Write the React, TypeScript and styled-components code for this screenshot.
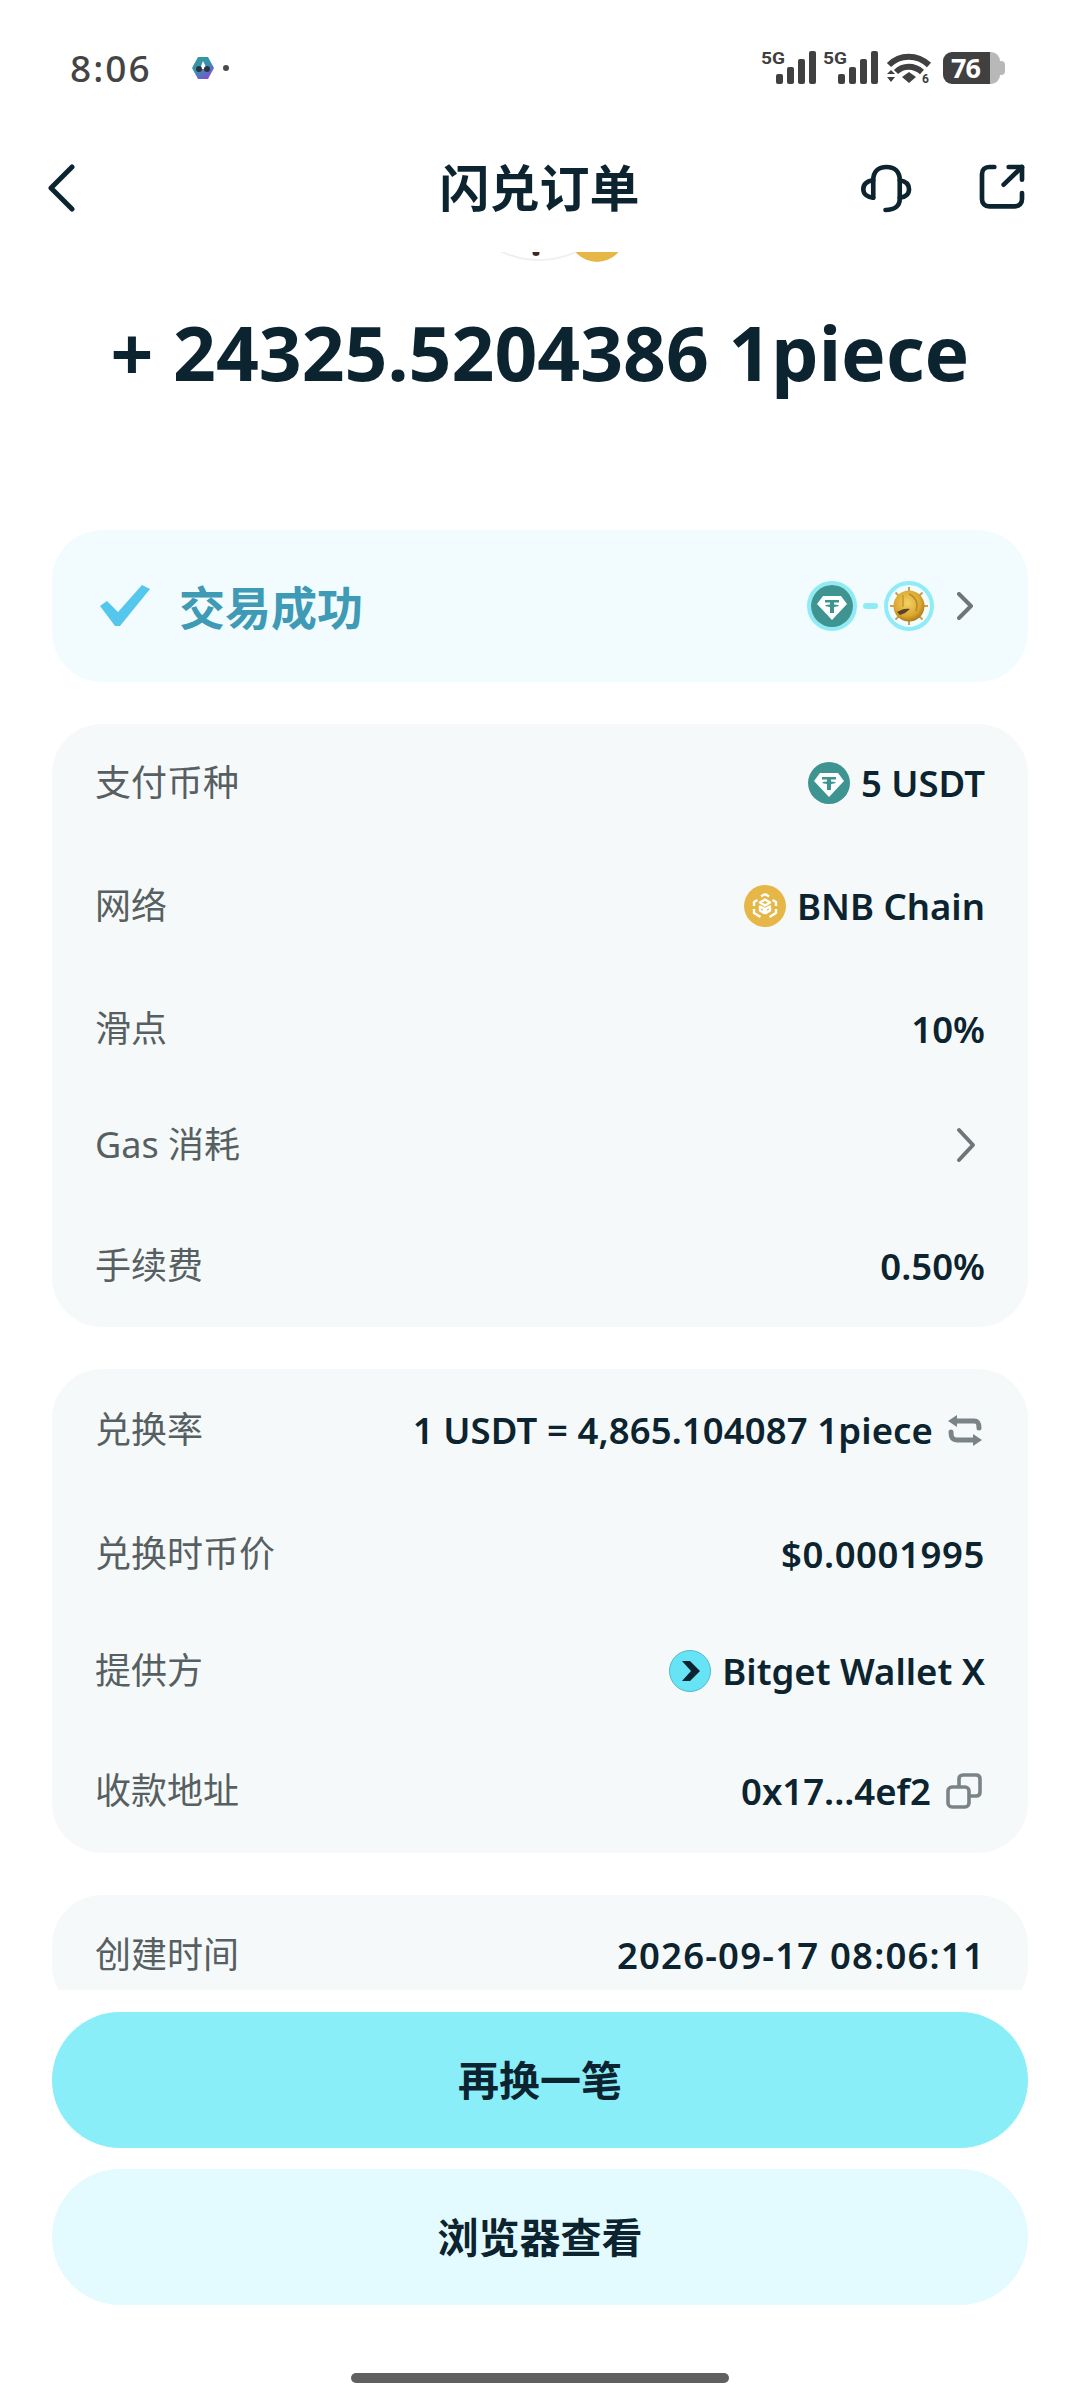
import React from "react";
import styled, { createGlobalStyle } from "styled-components";

const GlobalStyle = createGlobalStyle`
    html, body {
        margin: 0;
        padding: 0;
        background: #fff;
    }
    * {
        box-sizing: border-box;
    }
`;

const Page = styled.div`
    width: 1080px;
    height: 2400px;
    display: flex;
    flex-direction: column;
    overflow: hidden;
    background: #fff;
    color: #0c2330;
    font-family: "Noto Sans", "Noto Sans CJK SC", sans-serif;
`;

const StatusBar = styled.div`
    height: 130px;
    flex: none;
    display: flex;
    align-items: center;
    justify-content: space-between;
    padding: 6px 75px 0 70px;
`;

const StatusLeft = styled.div`
    display: flex;
    align-items: center;
    gap: 8px;
`;

const Time = styled.span`
    font-size: 37px;
    font-weight: 500;
    letter-spacing: 2px;
    color: #444;
    width: 113px;
    line-height: 40px;
`;

const Dot = styled.span`
    width: 6px;
    height: 6px;
    border-radius: 50%;
    background: #4a4a4a;
`;

const StatusRight = styled.div`
    display: flex;
    align-items: center;
    gap: 8px;
`;

const StatusIcon = styled.svg`
    display: block;
    overflow: visible;
`;

const Battery = styled.div`
    position: relative;
    width: 57px;
    height: 32px;
    margin-left: 3px;
    margin-right: 5px;
    border-radius: 9px;
    background: linear-gradient(90deg, #404040 0 47px, #b8b8b8 47px);
    color: #fff;
    font-size: 27px;
    font-weight: 700;
    line-height: 32px;
    padding-left: 8px;
    letter-spacing: -1px;

    &::after {
        content: "";
        position: absolute;
        right: -5px;
        top: 9px;
        width: 5px;
        height: 14px;
        border-radius: 0 4px 4px 0;
        background: #b8b8b8;
    }
`;

const NavBar = styled.div`
    height: 122px;
    flex: none;
    padding: 0 53px 6px 46px;
    display: grid;
    grid-template-columns: 1fr auto 1fr;
    align-items: center;
`;

const NavTitle = styled.h1`
    margin: 0;
    font-size: 50px;
    font-weight: 600;
    line-height: 60px;
    color: #0c2330;
    position: relative;
    left: 3px;
`;

const NavActions = styled.div`
    justify-self: end;
    display: flex;
    align-items: center;
    gap: 64px;
`;

const Scroller = styled.div`
    flex: 1;
    min-height: 0;
    overflow: hidden;
    padding: 0 52px;
    display: flex;
    flex-direction: column;
    align-items: stretch;
`;

const HeroCoins = styled.svg`
    display: block;
    flex: none;
    align-self: center;
    margin-left: 43px;
`;

const Amount = styled.div`
    margin-top: 40px;
    margin-bottom: 128px;
    flex: none;
    text-align: center;
    font-size: 75px;
    font-weight: 700;
    line-height: 100px;
    white-space: nowrap;
`;

const SuccessCard = styled.div`
    flex: none;
    height: 152px;
    border-radius: 50px;
    background: #f2fcfe;
    padding: 0 55px 0 48px;
    display: flex;
    align-items: center;
    justify-content: space-between;
`;

const SuccessLeft = styled.div`
    display: flex;
    align-items: center;
    gap: 29px;
`;

const SuccessText = styled.span`
    font-size: 46px;
    font-weight: 600;
    line-height: 60px;
    color: #3f9ab5;
    padding-top: 2px;
`;

const SuccessRight = styled.div`
    display: flex;
    align-items: center;
`;

const CoinRing = styled.div`
    width: 50px;
    height: 50px;
    border-radius: 50%;
    border: 4px solid #8fecf7;
    display: flex;
    align-items: center;
    justify-content: center;
`;

const RouteDash = styled.div`
    width: 15px;
    height: 6px;
    margin: 0 6px;
    border-radius: 3px;
    background: #8fecf7;
`;

const RouteChevron = styled.svg`
    margin-left: 23px;
`;

const Card = styled.div<{ $bottom: number; $top?: number }>`
    flex: none;
    margin-top: 42px;
    padding: ${(p) => p.$top ?? 29}px 43px ${(p) => p.$bottom}px;
    border-radius: 50px;
    background: #f6f9f9;
`;

const Row = styled.div<{ $gap?: number }>`
    height: 60px;
    margin-top: ${(p) => p.$gap ?? 0}px;
    display: flex;
    align-items: center;
    justify-content: space-between;
`;

const Label = styled.span`
    font-size: 36px;
    line-height: 60px;
    color: #565f62;
`;

const Value = styled.div<{ $spacing?: number }>`
    display: flex;
    align-items: center;
    font-size: 36.5px;
    font-weight: 600;
    line-height: 60px;
    letter-spacing: ${(p) => p.$spacing ?? 0}px;
    color: #0c2330;
    white-space: nowrap;
`;

const ValueIcon = styled.svg`
    margin-right: 11px;
    flex: none;
`;

const TrailingIcon = styled.svg`
    margin-left: 15px;
    margin-right: 3px;
    flex: none;
`;

const RowChevronIcon = styled.svg`
    margin-right: 7px;
`;

const Footer = styled.div`
    flex: none;
    padding: 22px 52px 0;
    display: flex;
    flex-direction: column;
    gap: 21px;
`;

const ActionButton = styled.div<{ $primary?: boolean }>`
    height: 136px;
    padding-bottom: 4px;
    border-radius: 68px;
    background: ${(p) => (p.$primary ? "#8aeef8" : "#e3fbfe")};
    display: flex;
    align-items: center;
    justify-content: center;
    font-size: 41px;
    font-weight: 700;
    color: #0c2330;
`;

const HomeBar = styled.div`
    flex: none;
    width: 378px;
    height: 10px;
    margin: 68px auto 17px;
    border-radius: 5px;
    background: #606060;
`;

const Signal = () => (
    <StatusIcon width="54" height="34" viewBox="0 0 54 34">
        <text x="-1" y="13" fontSize="17" fontWeight="700" fill="#404040" fontFamily="Roboto, sans-serif" textLength="24" lengthAdjust="spacingAndGlyphs">5G</text>
        <rect x="14" y="23" width="7" height="10" rx="2" fill="#404040" />
        <rect x="25" y="16" width="7" height="17" rx="2" fill="#404040" />
        <rect x="36" y="8" width="7" height="25" rx="2" fill="#404040" />
        <rect x="47" y="0" width="7" height="33" rx="2" fill="#404040" />
    </StatusIcon>
);

const Wifi = () => (
    <StatusIcon width="46" height="32" viewBox="0 0 46 32" fill="none">
        <path d="M3 13 C14 2 31 2 43 13" stroke="#404040" strokeWidth="6" />
        <path d="M10 20 C17 13 28 13 36 20" stroke="#404040" strokeWidth="6" />
        <path d="M16 25 L23 20 L30 25 L23 31 Z" fill="#404040" />
        <path d="M1 22 L5 18 L9 22 Z M1 25 H9 L5 30 Z" fill="#404040" />
        <text x="36" y="31" fontSize="12" fontWeight="700" fill="#404040" fontFamily="Roboto, sans-serif">6</text>
    </StatusIcon>
);

const HexLogo = () => (
    <svg width="24" height="24" viewBox="0 0 24 24">
        <defs>
            <linearGradient id="hexfill" x1="0" y1="0" x2="0.6" y2="1">
                <stop offset="0" stopColor="#2f9d94" />
                <stop offset="0.55" stopColor="#3a8fb0" />
                <stop offset="1" stopColor="#7a55cf" />
            </linearGradient>
        </defs>
        <path d="M7 1 H17 L23 12 L17 23 H7 L1 12 Z" fill="url(#hexfill)" />
        <path d="M12 5 L16 13 H9 Z" fill="#fff" />
        <circle cx="8" cy="13" r="3" fill="#2b3340" />
        <circle cx="16" cy="13" r="3" fill="#2b3340" />
    </svg>
);

const BackIcon = () => (
    <svg width="30" height="48" viewBox="0 0 30 48" fill="none">
        <path d="M26 3 L5 24 L26 45" stroke="#0c2330" strokeWidth="5" strokeLinecap="round" strokeLinejoin="round" />
    </svg>
);

const HeadsetIcon = () => (
    <svg width="53" height="53" viewBox="60 70 160 160" fill="none" stroke="#0c2330" strokeWidth="14" strokeLinecap="round" strokeLinejoin="round">
        <path d="M100 178 V125 C100 100 115 85 140 85 C165 85 180 100 180 125 V182 C180 202 165 215 137 215" />
        <path d="M100 125 C80 128 70 138 70 152 C70 166 82 176 100 178" />
        <path d="M180 125 C198 128 208 138 208 152 C208 166 198 176 180 178" />
    </svg>
);

const ShareIcon = () => (
    <svg width="50" height="50" viewBox="410 80 150 150" fill="none" stroke="#0c2330" strokeWidth="14" strokeLinecap="round" strokeLinejoin="round">
        <path d="M462 92 H447 C433 92 425 100 425 114 V188 C425 202 433 210 447 210 H523 C537 210 545 202 545 188 V170" />
        <path d="M490 145 L545 92" />
        <path d="M505 92 H545 V130" />
    </svg>
);

const CheckIcon = () => (
    <svg width="50" height="42" viewBox="0 0 50 42">
        <path d="M0 21 L7 16 L18 27 L42 0 L50 4 L20 41 L15 41 Z" fill="#55c6ec" />
    </svg>
);

const TetherPaths = () => (
    <>
        <circle cx="21" cy="21" r="21" fill="#3d9490" />
        <path d="M12 11 H30 L36 19 L21 35 L6 19 Z" fill="#fff" />
        <path d="M14 15 H28 V17.5 H23 V19.5 C25 19.6 27 20 28 20.7 C27 21.4 25 21.8 23 21.9 V28 H19 V21.9 C17 21.8 15 21.4 14 20.7 C15 20 17 19.6 19 19.5 V17.5 H14 Z" fill="#3d9490" />
    </>
);

const BnbMark = () => (
    <ValueIcon width="42" height="42" viewBox="0 0 42 42">
        <circle cx="21" cy="21" r="21" fill="#e6b647" />
        <g fill="none" stroke="#fff" strokeWidth="2.4" strokeLinejoin="round">
            <path d="M21 9 L25 11.5 M21 9 L17 11.5" />
            <path d="M21 14.5 L26 17.5 L21 20.5 L16 17.5 Z" />
            <path d="M13.5 15 L10 17 V21 M28.5 15 L32 17 V21" />
            <path d="M16 21.5 V25.5 L20 28 V23.5 Z M26 21.5 V25.5 L22 28 V23.5 Z" />
            <path d="M10 24 V28 L16.5 32 M32 24 V28 L25.5 32" />
        </g>
    </ValueIcon>
);

const GoldCoin = () => (
    <svg width="40" height="40" viewBox="0 0 40 40">
        <defs>
            <radialGradient id="goldfill" cx="0.45" cy="0.4" r="0.6">
                <stop offset="0" stopColor="#f4d264" />
                <stop offset="0.7" stopColor="#dba82f" />
                <stop offset="1" stopColor="#b07c1c" />
            </radialGradient>
        </defs>
        <g stroke="#c8a24a" strokeWidth="2">
            <path d="M20 1 V39 M1 20 H39 M6.5 6.5 L33.5 33.5 M33.5 6.5 L6.5 33.5" />
        </g>
        <circle cx="20" cy="20" r="15.5" fill="url(#goldfill)" />
        <path d="M8 26 C13 23 17 22 21 23 L16 27 L11 29 Z" fill="#5a4226" />
        <path d="M20 8 C26 11 30 16 27 25" fill="none" stroke="#b98a2e" strokeWidth="1.6" />
        <path d="M14 9 V21" fill="none" stroke="#c4962e" strokeWidth="1.4" />
    </svg>
);

const BitgetMark = () => (
    <ValueIcon width="42" height="42" viewBox="0 0 42 42">
        <circle cx="21" cy="21" r="20.5" fill="#66e3f5" stroke="#57b9c8" strokeWidth="1" />
        <path d="M13 11 H21 L31 21 L21 31 H13 L22 21 Z" fill="#0c2330" />
    </ValueIcon>
);

const SwapIcon = () => (
    <TrailingIcon width="34" height="32" viewBox="0 0 34 32" fill="none">
        <path d="M8 7 H26 C30 7 31 9 31 14" stroke="#7a8487" strokeWidth="5" strokeLinecap="round" />
        <path d="M0 7 L9 1 V13 Z" fill="#7a8487" />
        <path d="M3 18 C3 23 4 26 9 26 H26" stroke="#7a8487" strokeWidth="5" strokeLinecap="round" />
        <path d="M34 26 L25 20 V32 Z" fill="#7a8487" />
    </TrailingIcon>
);

const CopyIcon = () => (
    <TrailingIcon width="36" height="36" viewBox="0 0 36 36" fill="none" stroke="#7a8487" strokeWidth="3.6" strokeLinejoin="round">
        <rect x="2" y="14" width="21" height="20" rx="4" />
        <path d="M13 14 V6 C13 3.5 14.5 2 17 2 H30 C32.5 2 34 3.5 34 6 V19 C34 21.5 32.5 23 30 23 H23" />
    </TrailingIcon>
);

const RowChevron = () => (
    <RowChevronIcon width="24" height="36" viewBox="0 0 24 36" fill="none">
        <path d="M5 3 L19 18 L5 33" stroke="#6f7578" strokeWidth="4" strokeLinecap="round" strokeLinejoin="round" />
    </RowChevronIcon>
);

const App: React.FC = (): JSX.Element => {
    return (
        <Page>
            <GlobalStyle />
            <StatusBar>
                <StatusLeft>
                    <Time>8:06</Time>
                    <HexLogo />
                    <Dot />
                </StatusLeft>
                <StatusRight>
                    <Signal />
                    <Signal />
                    <Wifi />
                    <Battery>76</Battery>
                </StatusRight>
            </StatusBar>
            <NavBar>
                <BackIcon />
                <NavTitle>闪兑订单</NavTitle>
                <NavActions>
                    <HeadsetIcon />
                    <ShareIcon />
                </NavActions>
            </NavBar>
            <Scroller>
                <HeroCoins width="130" height="10" viewBox="0 0 130 10">
                    <circle cx="42" cy="-80" r="88" fill="#fff" stroke="#eef1f2" strokeWidth="2" />
                    <ellipse cx="39" cy="1" rx="3.5" ry="3" fill="#3a2a24" />
                    <circle cx="100" cy="-18" r="28" fill="#e6b647" />
                </HeroCoins>
                <Amount>+ 24325.5204386 1piece</Amount>
                <SuccessCard>
                    <SuccessLeft>
                        <CheckIcon />
                        <SuccessText>交易成功</SuccessText>
                    </SuccessLeft>
                    <SuccessRight>
                        <CoinRing>
                            <svg width="42" height="42" viewBox="0 0 42 42">
                                <TetherPaths />
                            </svg>
                        </CoinRing>
                        <RouteDash />
                        <CoinRing>
                            <GoldCoin />
                        </CoinRing>
                        <RouteChevron width="16" height="28" viewBox="0 0 16 28" fill="none">
                            <path d="M2 2 L14 14 L2 26" stroke="#6f7578" strokeWidth="4" strokeLinecap="round" strokeLinejoin="round" />
                        </RouteChevron>
                    </SuccessRight>
                </SuccessCard>
                <Card $bottom={31}>
                    <Row>
                        <Label>支付币种</Label>
                        <Value>
                            <ValueIcon width="42" height="42" viewBox="0 0 42 42">
                                <TetherPaths />
                            </ValueIcon>
                            5 USDT
                        </Value>
                    </Row>
                    <Row $gap={63}>
                        <Label>网络</Label>
                        <Value>
                            <BnbMark />
                            BNB Chain
                        </Value>
                    </Row>
                    <Row $gap={63}>
                        <Label>滑点</Label>
                        <Value>10%</Value>
                    </Row>
                    <Row $gap={56}>
                        <Label>Gas 消耗</Label>
                        <Value>
                            <RowChevron />
                        </Value>
                    </Row>
                    <Row $gap={61}>
                        <Label>手续费</Label>
                        <Value>0.50%</Value>
                    </Row>
                </Card>
                <Card $top={31} $bottom={32}>
                    <Row>
                        <Label>兑换率</Label>
                        <Value $spacing={0.1}>
                            1 USDT = 4,865.104087 1piece
                            <SwapIcon />
                        </Value>
                    </Row>
                    <Row $gap={64}>
                        <Label>兑换时币价</Label>
                        <Value $spacing={0.6}>$0.0001995</Value>
                    </Row>
                    <Row $gap={57}>
                        <Label>提供方</Label>
                        <Value>
                            <BitgetMark />
                            Bitget Wallet X
                        </Value>
                    </Row>
                    <Row $gap={60}>
                        <Label>收款地址</Label>
                        <Value>
                            0x17...4ef2
                            <CopyIcon />
                        </Value>
                    </Row>
                </Card>
                <Card $top={30} $bottom={30}>
                    <Row>
                        <Label>创建时间</Label>
                        <Value $spacing={1.2}>2026-09-17 08:06:11</Value>
                    </Row>
                </Card>
            </Scroller>
            <Footer>
                <ActionButton $primary>再换一笔</ActionButton>
                <ActionButton>浏览器查看</ActionButton>
            </Footer>
            <HomeBar />
        </Page>
    );
};

export default App;
